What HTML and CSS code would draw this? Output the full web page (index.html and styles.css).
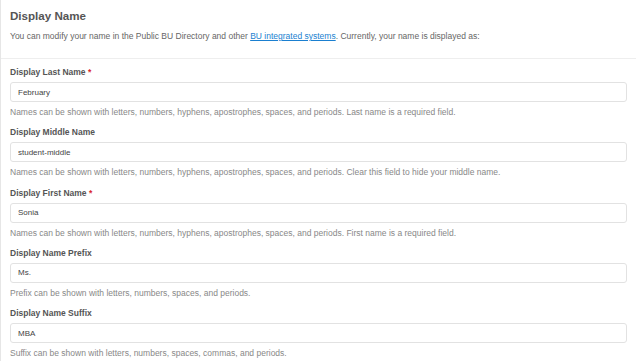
FILE: index.html
```html
<!DOCTYPE html>
<html lang="en">
<head>
    <meta charset="UTF-8">
    <meta name="viewport" content="width=device-width, initial-scale=1.0">
    <title>Display Name</title>
    <link rel="stylesheet" href="styles.css">
</head>
<body>

    <div class="panel">
        <div class="panel-header">
            <h2 class="title">Display Name</h2>
            <p class="intro">You can modify your name in the Public BU Directory and other <a href="#">BU integrated systems</a>. Currently, your name is displayed as:</p>
        </div>

        <form class="panel-body">
            <div class="field">
                <label class="label" for="last">Display Last Name <span class="req">*</span></label>
                <input type="text" id="last" class="input" value="February">
                <p class="help">Names can be shown with letters, numbers, hyphens, apostrophes, spaces, and periods. Last name is a required field.</p>
            </div>

            <div class="field">
                <label class="label" for="middle">Display Middle Name</label>
                <input type="text" id="middle" class="input" value="student-middle">
                <p class="help">Names can be shown with letters, numbers, hyphens, apostrophes, spaces, and periods. Clear this field to hide your middle name.</p>
            </div>

            <div class="field">
                <label class="label" for="first">Display First Name <span class="req">*</span></label>
                <input type="text" id="first" class="input" value="Sonia">
                <p class="help">Names can be shown with letters, numbers, hyphens, apostrophes, spaces, and periods. First name is a required field.</p>
            </div>

            <div class="field">
                <label class="label" for="prefix">Display Name Prefix</label>
                <input type="text" id="prefix" class="input" value="Ms.">
                <p class="help">Prefix can be shown with letters, numbers, spaces, and periods.</p>
            </div>

            <div class="field">
                <label class="label" for="suffix">Display Name Suffix</label>
                <input type="text" id="suffix" class="input" value="MBA">
                <p class="help">Suffix can be shown with letters, numbers, spaces, commas, and periods.</p>
            </div>
        </form>
    </div>

</body>
</html>
```

FILE: styles.css
```css
body {
    font-family: "Liberation Sans", Arial, sans-serif;
    background-color: #fff;
    margin: 0;
    color: #555;
}
.panel {
    border-left: 1px solid #e6e6e6;
    min-height: 100vh;
}
.panel-header {
    padding: 9px 9px 16px 9px;
    border-bottom: 1px solid #eee;
}
.title {
    font-size: 11.6px;
    line-height: 14px;
    font-weight: bold;
    color: #555;
    margin: 0 0 7px 0;
}
.intro {
    font-size: 8.5px;
    line-height: 12px;
    color: #666;
    margin: 0;
}
.intro a {
    color: #1a7fd0;
    text-decoration: underline;
}
.panel-body {
    padding: 7px 9px 0 9px;
    margin: 0;
}
.field {
    display: flex;
    flex-direction: column;
    margin-bottom: 8.25px;
}
.label {
    font-size: 8.5px;
    line-height: 12px;
    font-weight: bold;
    color: #555;
    margin-bottom: 4px;
}
.req {
    color: #d9262c;
}
.input {
    box-sizing: border-box;
    height: 20px;
    width: 100%;
    padding: 0 7px;
    font-family: "Liberation Sans", Arial, sans-serif;
    font-size: 8px;
    color: #444;
    border: 1px solid #e2e2e2;
    border-radius: 3px;
    background-color: #fff;
    margin: 0;
}
.help {
    font-size: 8.5px;
    line-height: 12px;
    color: #888;
    margin: 4px 0 0 0;
}
```
